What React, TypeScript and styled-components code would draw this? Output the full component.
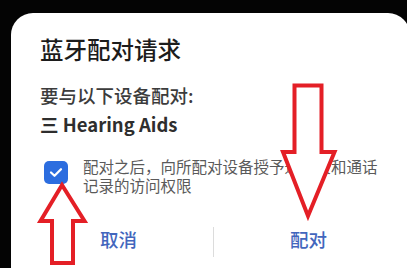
import React from "react";
import styled, { createGlobalStyle } from "styled-components";

const GlobalStyle = createGlobalStyle`
  html, body { margin: 0; padding: 0; background: #000; }
  * { box-sizing: border-box; }
`;

const FONT = `"Noto Sans CJK SC", "Noto Sans", sans-serif`;

const Screen = styled.div`
  position: relative;
  width: 407px;
  height: 268px;
  overflow: hidden;
  background: #040404;
  padding: 13px 0 0 11px;
  font-family: ${FONT};
`;

const Card = styled.div`
  width: 399px;
  height: 280px;
  background: #ffffff;
  border-radius: 22px 22px 0 0;
  padding-top: 20px;
  display: flex;
  flex-direction: column;
`;

const Body = styled.div`
  padding: 0 27px 0 29px;
  display: flex;
  flex-direction: column;
`;

const Title = styled.div`
  font-size: 23.5px;
  line-height: 32px;
  font-weight: 500;
  color: #1c1c1c;
`;

const Subtitle = styled.div`
  margin-top: 17px;
  font-size: 18.5px;
  line-height: 26px;
  font-weight: 500;
  color: #3c3c3c;
`;

const Device = styled.div`
  margin-top: 3px;
  font-size: 18.5px;
  line-height: 26px;
  font-weight: 700;
  color: #2e2e2e;
`;

const ConsentRow = styled.div`
  margin-top: 20px;
  display: flex;
  align-items: flex-start;
  gap: 15px;
`;

const Checkbox = styled.div`
  position: relative;
  flex: none;
  margin: 3.5px 0 0 4px;
  width: 24px;
  height: 23px;
  border-radius: 5px;
  background: #2c6ddf;
  display: flex;
  align-items: center;
  justify-content: center;
`;

const ConsentText = styled.div`
  flex: 1;
  font-size: 15.5px;
  line-height: 19px;
  color: #5a5a5a;
`;

const Actions = styled.div`
  margin-top: 22px;
  padding: 0 7px 0 13px;
  height: 44px;
  display: grid;
  grid-template-columns: 1fr 1px 1fr;
  align-items: center;
`;

const ActionButton = styled.div`
  text-align: center;
  font-size: 18.5px;
  line-height: 26px;
  font-weight: 500;
  color: #4266bd;
`;

const Divider = styled.div`
  width: 1px;
  height: 30px;
  margin-top: 5px;
  background: #dcdcdc;
`;

const Overlay = styled.svg`
  position: absolute;
  left: 0;
  top: 0;
  width: 407px;
  height: 268px;
  pointer-events: none;
`;

export default function App() {
  return (
    <>
      <GlobalStyle />
      <Screen>
        <Card>
          <Body>
            <Title>蓝牙配对请求</Title>
            <Subtitle>要与以下设备配对:</Subtitle>
            <Device>三 Hearing Aids</Device>
            <ConsentRow>
              <Checkbox>
                <svg width="14" height="11" viewBox="0 0 14 11">
                  <path d="M2 5.5 L5.5 8.8 L12 2.2" fill="none" stroke="#fff" strokeWidth="2.2" strokeLinecap="round" strokeLinejoin="round" />
                </svg>
              </Checkbox>
              <ConsentText>配对之后，向所配对设备授予通讯录和通话记录的访问权限</ConsentText>
            </ConsentRow>
          </Body>
          <Actions>
            <ActionButton>取消</ActionButton>
            <Divider />
            <ActionButton>配对</ActionButton>
          </Actions>
        </Card>
        <Overlay viewBox="0 0 407 268">
          <polygon
            points="294.5,85.5 321.5,85.5 321.5,152 334.5,152 308,216 283,152 294.5,152"
            fill="#fff"
            stroke="#e41f26"
            strokeWidth="4"
            strokeLinejoin="miter"
          />
          <polygon
            points="62,185 84.5,221 73,221 73,263 52,263 52,221 40.5,221"
            fill="#fff"
            stroke="#e41f26"
            strokeWidth="4"
            strokeLinejoin="miter"
          />
        </Overlay>
      </Screen>
    </>
  );
}
